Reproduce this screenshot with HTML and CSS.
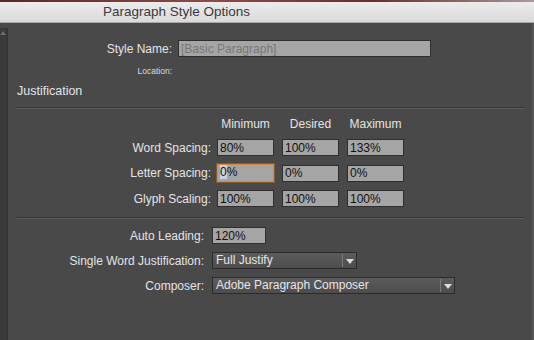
FILE: index.html
```html
<!DOCTYPE html>
<html lang="en">
<head>
    <meta charset="UTF-8">
    <title>Paragraph Style Options</title>
    <link rel="stylesheet" href="styles.css">
</head>
<body>
    <div class="top-strip"></div>
    <div class="titlebar">Paragraph Style Options</div>

    <div class="window">
        <div class="sidebar"><span class="sidebar-arrow"></span></div>

        <div class="content">
            <div class="name-row">
                <label class="name-label" for="styleName">Style Name:</label>
                <input class="field name-field" id="styleName" type="text" placeholder="[Basic Paragraph]" readonly>
            </div>
            <div class="location-row">
                <span class="name-label location-label">Location:</span>
            </div>

            <div class="section-title">Justification</div>
            <div class="divider"></div>

            <div class="spacing">
                <div class="spacing-row headers">
                    <span class="spacing-label"></span>
                    <span class="col-head">Minimum</span>
                    <span class="col-head">Desired</span>
                    <span class="col-head">Maximum</span>
                </div>
                <div class="spacing-row">
                    <span class="spacing-label">Word Spacing:</span>
                    <input class="field cell" type="text" value="80%" readonly>
                    <input class="field cell" type="text" value="100%" readonly>
                    <input class="field cell" type="text" value="133%" readonly>
                </div>
                <div class="spacing-row">
                    <span class="spacing-label">Letter Spacing:</span>
                    <div class="field cell focused"><span class="caret">0</span>%</div>
                    <input class="field cell" type="text" value="0%" readonly>
                    <input class="field cell" type="text" value="0%" readonly>
                </div>
                <div class="spacing-row">
                    <span class="spacing-label">Glyph Scaling:</span>
                    <input class="field cell" type="text" value="100%" readonly>
                    <input class="field cell" type="text" value="100%" readonly>
                    <input class="field cell" type="text" value="100%" readonly>
                </div>
            </div>

            <div class="divider lower"></div>

            <div class="options">
                <div class="option-row">
                    <span class="option-label">Auto Leading:</span>
                    <input class="field leading-field" type="text" value="120%" readonly>
                </div>
                <div class="option-row">
                    <span class="option-label">Single Word Justification:</span>
                    <div class="dropdown short">
                        <span class="dropdown-text">Full Justify</span>
                        <span class="dropdown-btn"></span>
                    </div>
                </div>
                <div class="option-row">
                    <span class="option-label">Composer:</span>
                    <div class="dropdown long">
                        <span class="dropdown-text">Adobe Paragraph Composer</span>
                        <span class="dropdown-btn"></span>
                    </div>
                </div>
            </div>
        </div>
    </div>
</body>
</html>
```

FILE: styles.css
```css
body {
    margin: 0;
    width: 534px;
    height: 340px;
    overflow: hidden;
    background-color: #494949;
    font-family: "Liberation Sans", Arial, sans-serif;
    font-size: 12px;
    color: #e4e4e4;
}

.top-strip {
    height: 2px;
    background: linear-gradient(90deg, #5d2626, #8c4d4a 40%, #6a2d2d 70%, #a89a9a);
}

.titlebar {
    height: 20px;
    line-height: 20px;
    padding-left: 103px;
    font-size: 13.5px;
    color: #3a3a3a;
    background: linear-gradient(#ececec, #dadada);
    border-bottom: 1px solid #a8a8a8;
}

.window {
    display: flex;
    height: 317px;
}

.sidebar {
    width: 7px;
    margin-top: 5px;
    background-color: #3a3a3a;
    border-right: 1px solid #333;
    position: relative;
}

.sidebar-arrow {
    position: absolute;
    top: 3px;
    left: 0;
    border-left: 3px solid transparent;
    border-right: 3px solid transparent;
    border-bottom: 4px solid #6e6e6e;
}

.content {
    flex: 1;
    border-right: 2px solid #565656;
}

/* inputs */
.field {
    box-sizing: border-box;
    height: 17px;
    margin: 0;
    padding: 0 2px;
    font-family: "Liberation Sans", Arial, sans-serif;
    font-size: 12px;
    line-height: 15px;
    color: #111;
    background-color: #a5a5a5;
    border: 1px solid #2e2e2e;
    border-radius: 0;
    outline: none;
}

.field::placeholder {
    color: #787878;
}

/* style name */
.name-row {
    display: flex;
    align-items: center;
    margin-top: 17px;
}

.name-label {
    width: 164px;
    margin-right: 6px;
    text-align: right;
}

.name-field {
    width: 253px;
}

.location-row {
    margin-top: 8px;
    line-height: 12px;
}

.location-label {
    display: block;
    font-size: 8.5px;
    color: #dcdcdc;
}

.section-title {
    margin-top: 7px;
    padding-left: 9px;
    line-height: 14px;
    font-size: 12.5px;
}

.divider {
    margin: 9px 8px 0 9px;
    border-top: 1px solid #363636;
    border-bottom: 1px solid #5b5b5b;
}

.divider.lower {
    margin-top: 10px;
}

/* spacing grid */
.spacing-row {
    display: flex;
    align-items: center;
    margin-top: 8px;
}

.spacing-row.headers {
    margin-top: 8px;
    line-height: 14px;
}

.spacing-label {
    width: 203px;
    margin-right: 6px;
    text-align: right;
}

.col-head,
.cell {
    width: 57px;
    margin-right: 8px;
}

.col-head {
    text-align: center;
}

.focused {
    height: 18px;
    border: 1px solid #d88a3c;
    box-shadow: 0 0 0 1px #8a5a2a;
}

.caret {
    background-color: #c9d2de;
}

/* lower options */
.options {
    margin-top: 0;
}

.option-row {
    display: flex;
    align-items: center;
    margin-top: 8px;
}

.option-label {
    width: 196px;
    margin-right: 8px;
    text-align: right;
}

.leading-field {
    width: 54px;
}

.dropdown {
    box-sizing: border-box;
    height: 17px;
    display: flex;
    align-items: center;
    background: linear-gradient(#5c5c5c, #4c4c4c);
    border: 1px solid #2b2b2b;
    color: #e6e6e6;
}

.dropdown.short {
    width: 145px;
}

.dropdown.long {
    width: 243px;
}

.dropdown-text {
    flex: 1;
    padding-left: 3px;
    line-height: 15px;
}

.dropdown-btn {
    width: 13px;
    height: 13px;
    border-left: 1px solid #7a7a7a;
    position: relative;
}

.dropdown-btn::after {
    content: "";
    position: absolute;
    left: 3px;
    top: 5px;
    border-left: 4px solid transparent;
    border-right: 4px solid transparent;
    border-top: 5px solid #dcdcdc;
}
```
